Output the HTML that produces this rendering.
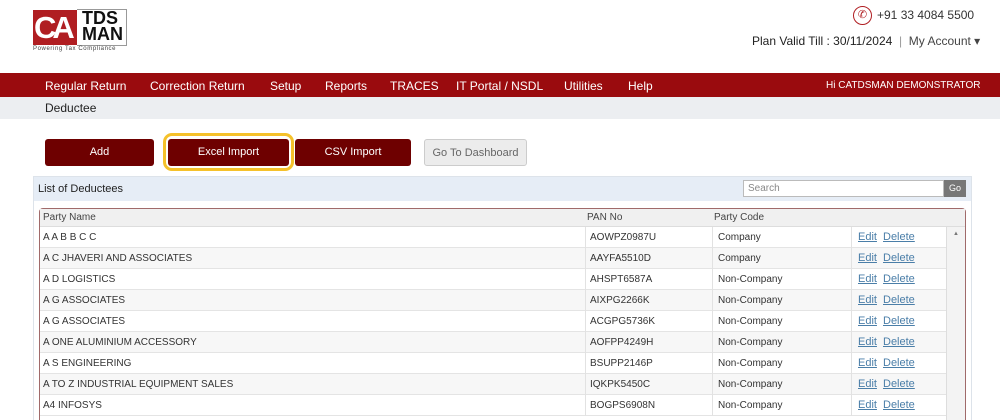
<!DOCTYPE html><html><head><style>
*{margin:0;padding:0;box-sizing:border-box}
html,body{width:1000px;height:420px;overflow:hidden}
body{background:#fff;font-family:"Liberation Sans",sans-serif;position:relative}
.a{position:absolute}
.nav{top:73px;left:0;width:1000px;height:24px;background:#9a0b0e;color:#fff;font-size:12px}
.nav span{position:absolute;top:6px}
.bc{top:97px;left:0;width:1000px;height:22px;background:#eceef1;font-size:12px;color:#222}
.btn{top:139px;height:27px;background:#6e0000;color:#fff;font-size:11px;text-align:center;line-height:27px;border-radius:3px}
.row{position:absolute;left:40px;width:906px;height:21px;font-size:10px;color:#333;border-bottom:1px solid #e4e4e4}
.row span{position:absolute;top:5px}
.row .e{color:#4a7ea8;text-decoration:underline;font-size:11px;top:4px}
.vl{position:absolute;top:0;height:21px;border-left:1px solid #e2e2e2}
</style></head><body>
<div class="a" style="left:33px;top:10px;width:44px;height:35px;background:#b01e22;color:#fff;font-size:31px;font-weight:bold;line-height:35px;letter-spacing:-4px;padding-left:1px">CA</div>
<div class="a" style="left:77px;top:9px;width:50px;height:37px;border:1px solid #999;border-left:none;background:#fff"></div>
<div class="a" style="left:82px;top:10px;color:#111;font-weight:bold;font-size:18px;line-height:16px">TDS<br>MAN</div>
<div class="a" style="left:33px;top:46px;font-size:6px;color:#444;letter-spacing:.6px">Powering Tax Compliance</div>
<div class="a" style="left:853px;top:6px;width:19px;height:19px;border:1.5px solid #b01e22;border-radius:50%;color:#b01e22;font-size:11px;text-align:center;line-height:16px">✆</div>
<div class="a" style="left:877px;top:8px;font-size:12px;color:#333">+91 33 4084 5500</div>
<div class="a" style="left:752px;top:34px;font-size:12px;color:#222">Plan Valid Till : 30/11/2024 <span style="color:#999">&nbsp;|&nbsp;</span> <span style="color:#444">My Account ▾</span></div>
<div class="a nav"><span style="left:45px">Regular Return</span><span style="left:150px">Correction Return</span><span style="left:270px">Setup</span><span style="left:325px">Reports</span><span style="left:390px">TRACES</span><span style="left:456px">IT Portal / NSDL</span><span style="left:564px">Utilities</span><span style="left:628px">Help</span><span style="left:826px;font-size:10px;top:7px">Hi CATDSMAN DEMONSTRATOR</span></div>
<div class="a bc"><span style="position:absolute;left:45px;top:4px">Deductee</span></div>
<div class="a btn" style="left:45px;width:109px">Add</div>
<div class="a" style="left:163px;top:133px;width:131px;height:38px;border:3px solid #f5c12a;border-radius:9px"></div>
<div class="a btn" style="left:168px;width:121px">Excel Import</div>
<div class="a btn" style="left:295px;width:116px">CSV Import</div>
<div class="a btn" style="left:424px;width:103px;background:#ececec;border:1px solid #ccc;color:#666">Go To Dashboard</div>
<div class="a" style="left:33px;top:176px;width:939px;height:250px;border:1px solid #dde3ea"></div>
<div class="a" style="left:34px;top:177px;width:937px;height:24px;background:#e6edf6;font-size:11px;color:#222;padding:6px 4px">List of Deductees</div>
<div class="a" style="left:743px;top:180px;width:201px;height:17px;border:1px solid #bbb;background:#fff;font-size:10px;color:#888;padding:2px 4px">Search</div>
<div class="a" style="left:944px;top:180px;width:22px;height:17px;background:#777;color:#fff;font-size:9px;text-align:center;line-height:17px">Go</div>
<div class="a" style="left:39px;top:208px;width:927px;height:220px;border:1px solid #a06a6a;border-radius:4px"></div>
<div class="a" style="left:40px;top:209px;width:925px;height:18px;background:#f0f0f0;font-size:10px;color:#444;border-bottom:1px solid #ddd"><span class="a" style="left:3px;top:3px">Party Name</span><span class="a" style="left:547px;top:3px">PAN No</span><span class="a" style="left:674px;top:3px">Party Code</span></div>
<div class="a" style="left:946px;top:227px;width:19px;height:200px;background:#f3f3f3;border-left:1px solid #ddd"><div style="font-size:6px;color:#777;text-align:center;margin-top:4px">▲</div></div>
<div id="rows"></div>
<script>
var d=[["A A B B C C","AOWPZ0987U","Company"],["A C JHAVERI AND ASSOCIATES","AAYFA5510D","Company"],["A D LOGISTICS","AHSPT6587A","Non-Company"],["A G ASSOCIATES","AIXPG2266K","Non-Company"],["A G ASSOCIATES","ACGPG5736K","Non-Company"],["A ONE ALUMINIUM ACCESSORY","AOFPP4249H","Non-Company"],["A S ENGINEERING","BSUPP2146P","Non-Company"],["A TO Z INDUSTRIAL EQUIPMENT SALES","IQKPK5450C","Non-Company"],["A4 INFOSYS","BOGPS6908N","Non-Company"]];
var h="";d.forEach(function(r,i){h+='<div class="row" style="top:'+(227+i*21)+'px;background:'+(i%2?'#f7f7f7':'#fff')+'"><span style="left:3px">'+r[0]+'</span><div class="vl" style="left:545px"></div><span style="left:550px">'+r[1]+'</span><div class="vl" style="left:672px"></div><span style="left:678px">'+r[2]+'</span><div class="vl" style="left:811px"></div><span class="e" style="left:818px">Edit</span><span class="e" style="left:843px">Delete</span></div>'});
document.getElementById("rows").innerHTML=h;
</script>
</body></html>
